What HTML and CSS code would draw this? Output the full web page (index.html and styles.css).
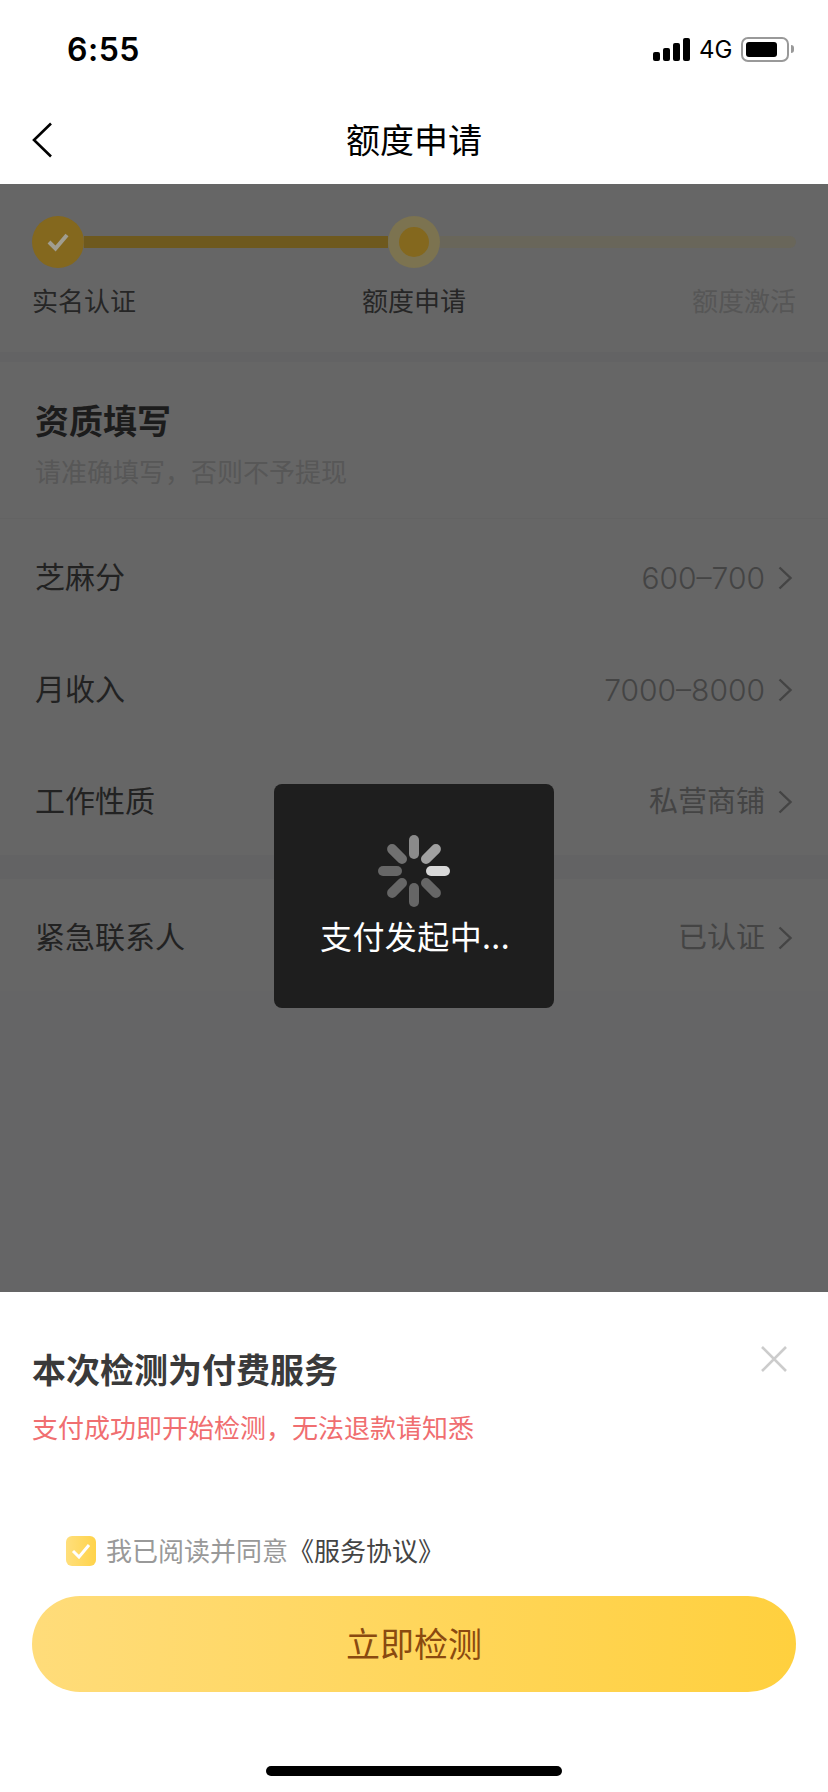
FILE: index.html
```html
<!DOCTYPE html>
<html lang="zh-CN">
<head>
    <meta charset="UTF-8">
    <meta name="viewport" content="width=device-width, initial-scale=1.0">
    <title>额度申请</title>
    <link rel="stylesheet" href="styles.css">
</head>
<body>
    <div class="page">
        <div class="status-bar">
            <span class="time">6:55</span>
            <div class="status-icons">
                <div class="signal">
                    <i class="s1"></i><i class="s2"></i><i class="s3"></i><i class="s4"></i>
                </div>
                <span class="network">4G</span>
                <div class="battery"><i></i></div>
                <div class="battery-nub"></div>
            </div>
        </div>

        <div class="nav-bar">
            <svg class="back" width="20" height="36" viewBox="0 0 20 36"><path d="M19 1.500 2 18l17 16.500" fill="none" stroke="#000" stroke-width="2.600"/></svg>
            <h1>额度申请</h1>
        </div>

        <div class="content">
            <div class="steps">
                <div class="track">
                    <div class="dot done">
                        <svg width="26" height="22" viewBox="0 0 26 22"><path d="M4 11l6.500 6.500L22 4" fill="none" stroke="#a09d90" stroke-width="4"/></svg>
                    </div>
                    <div class="line on"></div>
                    <div class="dot current"><i></i></div>
                    <div class="line off"></div>
                </div>
                <div class="step-labels">
                    <span>实名认证</span>
                    <span>额度申请</span>
                    <span class="muted">额度激活</span>
                </div>
            </div>

            <div class="band band-first"></div>

            <div class="section-head">
                <h2>资质填写</h2>
                <p>请准确填写&#xFF0C;否则不予提现</p>
            </div>

            <div class="row">
                <span class="row-label">芝麻分</span>
                <span class="row-value num">600–700</span>
                <svg class="arrow" width="15" height="24" viewBox="0 0 15 24"><path d="M1.500 1.500 12.500 12 1.500 22.500" fill="none" stroke="#444" stroke-width="2.400"/></svg>
            </div>
            <div class="row">
                <span class="row-label">月收入</span>
                <span class="row-value num">7000–8000</span>
                <svg class="arrow" width="15" height="24" viewBox="0 0 15 24"><path d="M1.500 1.500 12.500 12 1.500 22.500" fill="none" stroke="#444" stroke-width="2.400"/></svg>
            </div>
            <div class="row">
                <span class="row-label">工作性质</span>
                <span class="row-value">私营商铺</span>
                <svg class="arrow" width="15" height="24" viewBox="0 0 15 24"><path d="M1.500 1.500 12.500 12 1.500 22.500" fill="none" stroke="#444" stroke-width="2.400"/></svg>
            </div>

            <div class="band band-second"></div>

            <div class="row">
                <span class="row-label">紧急联系人</span>
                <span class="row-value">已认证</span>
                <svg class="arrow" width="15" height="24" viewBox="0 0 15 24"><path d="M1.500 1.500 12.500 12 1.500 22.500" fill="none" stroke="#444" stroke-width="2.400"/></svg>
            </div>

            <div class="rest"></div>
        </div>

        <div class="sheet">
            <svg class="close" width="28" height="28" viewBox="0 0 28 28"><path d="M2 2l24 24M26 2 2 26" fill="none" stroke="#ccc" stroke-width="2.600"/></svg>
            <h3>本次检测为付费服务</h3>
            <p class="warn">支付成功即开始检测&#xFF0C;无法退款请知悉</p>
            <div class="agree">
                <div class="checkbox">
                    <svg width="20" height="16" viewBox="0 0 20 16"><path d="M2 8l6 6L18 2" fill="none" stroke="#fff" stroke-width="3"/></svg>
                </div>
                <span>我已阅读并同意<em>《服务协议》</em></span>
            </div>
            <button class="submit">立即检测</button>
            <div class="home-bar"></div>
        </div>

        <div class="toast">
            <svg class="spinner" width="72" height="72" viewBox="0 0 72 72">
                <g stroke-width="10" stroke-linecap="round">
                    <path d="M36 5v14" stroke="#8a8a8a"/>
                    <path d="M57.900 14.100 48 24" stroke="#a0a0a0"/>
                    <path d="M67 36H53" stroke="#d8d8d8"/>
                    <path d="M57.900 57.900 48 48" stroke="#666"/>
                    <path d="M36 67V53" stroke="#666"/>
                    <path d="M14.100 57.900 24 48" stroke="#666"/>
                    <path d="M5 36h14" stroke="#666"/>
                    <path d="M14.100 14.100 24 24" stroke="#707070"/>
                </g>
            </svg>
            <span>支付发起中...</span>
        </div>
    </div>
</body>
</html>
```

FILE: styles.css
```css
* {
    box-sizing: border-box;
}

html, body {
    margin: 0;
    padding: 0;
}

body {
    font-family: "Noto Sans CJK SC", "Liberation Sans", sans-serif;
    background-color: #fff;
}

.page {
    position: relative;
    display: flex;
    flex-direction: column;
    width: 828px;
    height: 1792px;
    overflow: hidden;
}

/* status bar */
.status-bar {
    display: flex;
    align-items: center;
    justify-content: space-between;
    height: 98px;
    padding: 0 34px 0 67px;
    flex-shrink: 0;
}

.time {
    font-family: Inter, "Liberation Sans", sans-serif;
    font-size: 32px;
    font-weight: 600;
    color: #000;
    letter-spacing: 0.5px;
}

.status-icons {
    display: flex;
    align-items: center;
}

.signal {
    display: flex;
    align-items: flex-end;
    gap: 3px;
    height: 23px;
}

.signal i {
    display: block;
    width: 7px;
    background-color: #000;
    border-radius: 2px;
}

.s1 { height: 9px; }
.s2 { height: 13px; }
.s3 { height: 18px; }
.s4 { height: 23px; }

.network {
    font-family: Inter, "Liberation Sans", sans-serif;
    font-size: 24px;
    color: #000;
    margin-left: 9px;
    width: 42px;
}

.battery {
    width: 48px;
    height: 25px;
    border: 2px solid #999;
    border-radius: 7px;
    padding: 3px;
}

.battery i {
    display: block;
    width: 31px;
    height: 15px;
    background-color: #000;
    border-radius: 3px;
}

.battery-nub {
    width: 3px;
    height: 8px;
    margin-left: 2px;
    background-color: #999;
    border-radius: 0 3px 3px 0;
}

/* nav */
.nav-bar {
    position: relative;
    display: flex;
    align-items: center;
    justify-content: center;
    height: 86px;
    flex-shrink: 0;
    background-color: #fff;
}

.nav-bar h1 {
    margin: 0;
    padding-bottom: 6px;
    font-size: 34px;
    font-weight: 400;
    color: #000;
}

.back {
    position: absolute;
    left: 32px;
    top: 24px;
}

/* dimmed page */
.content {
    flex: 1;
    display: flex;
    flex-direction: column;
    background-color: #666;
}

.steps {
    padding: 32px 32px 0;
    height: 168px;
    flex-shrink: 0;
}

.track {
    display: flex;
    align-items: center;
    height: 52px;
}

.dot {
    display: flex;
    align-items: center;
    justify-content: center;
    width: 52px;
    height: 52px;
    border-radius: 50%;
    flex-shrink: 0;
}

.dot.done {
    background-color: #84681e;
}

.dot.current {
    background-color: #7c7350;
}

.dot.current i {
    display: block;
    width: 30px;
    height: 30px;
    border-radius: 50%;
    background-color: #84681e;
}

.line {
    height: 12px;
}

.line.on {
    flex: 0 0 304px;
    background-color: #6e591e;
}

.line.off {
    flex: 1;
    background-color: #69665a;
    border-radius: 0 6px 6px 0;
}

.step-labels {
    display: flex;
    justify-content: space-between;
    margin-top: 13px;
    font-size: 26px;
    line-height: 38px;
    color: #262626;
}

.step-labels .muted {
    color: #565656;
}

.band {
    flex-shrink: 0;
    background-color: #636364;
}

.band-first {
    height: 10px;
}

.section-head {
    height: 157px;
    padding: 34px 35px 0;
    border-bottom: 1px solid #636363;
    flex-shrink: 0;
}

.section-head h2 {
    margin: 0;
    font-size: 34px;
    line-height: 48px;
    font-weight: 700;
    color: #1c1c1c;
}

.section-head p {
    margin: 8px 0 0;
    font-size: 26px;
    line-height: 38px;
    color: #575757;
}

.row {
    display: flex;
    align-items: center;
    height: 112px;
    padding: 0 35px;
    flex-shrink: 0;
}

.row-label {
    flex: 1;
    font-size: 30px;
    color: #222;
}

.row-value {
    font-size: 29px;
    color: #444;
}

.row-value.num {
    font-family: Inter, "Liberation Sans", sans-serif;
    font-size: 30px;
    font-weight: 300;
    padding-top: 6px;
}

.arrow {
    margin: 6px 0 0 13px;
}

.band-second {
    height: 24px;
}

.rest {
    flex: 1;
    background-color: #656566;
}

/* bottom sheet */
.sheet {
    position: relative;
    height: 500px;
    padding: 52px 32px 0;
    flex-shrink: 0;
    background-color: #fff;
}

.sheet h3 {
    margin: 0;
    font-size: 34px;
    line-height: 50px;
    font-weight: 600;
    color: #3a3a3a;
}

.warn {
    margin: 14px 0 0;
    font-size: 26px;
    line-height: 38px;
    color: #f06e70;
}

.close {
    position: absolute;
    top: 53px;
    right: 40px;
}

.agree {
    display: flex;
    align-items: center;
    margin: 90px 0 0 34px;
    height: 30px;
    font-size: 26px;
    color: #999;
}

.agree span {
    margin-left: -1px;
    padding-bottom: 4px;
}

.agree em {
    font-style: normal;
    color: #444;
}

.checkbox {
    display: flex;
    align-items: center;
    justify-content: center;
    width: 30px;
    height: 30px;
    margin-right: 11px;
    border-radius: 6px;
    background: linear-gradient(90deg, #ffdf7c, #ffd34a);
}

.submit {
    display: block;
    width: 764px;
    height: 96px;
    margin-top: 30px;
    padding: 0 0 4px;
    border: 0;
    border-radius: 48px;
    background: linear-gradient(90deg, #ffdc7a, #ffd03e);
    font-family: inherit;
    font-size: 34px;
    color: #8a4a10;
}

.home-bar {
    width: 296px;
    height: 10px;
    margin: 74px auto 0;
    border-radius: 5px;
    background-color: #000;
}

/* loading toast */
.toast {
    position: absolute;
    left: 274px;
    top: 784px;
    display: flex;
    flex-direction: column;
    align-items: center;
    width: 280px;
    height: 224px;
    padding-top: 51px;
    border-radius: 8px;
    background-color: #1e1e1e;
    color: #fff;
    font-size: 32px;
}

.toast span {
    margin: 4px 0 0 2px;
    line-height: 48px;
    letter-spacing: 0.4px;
}
```
